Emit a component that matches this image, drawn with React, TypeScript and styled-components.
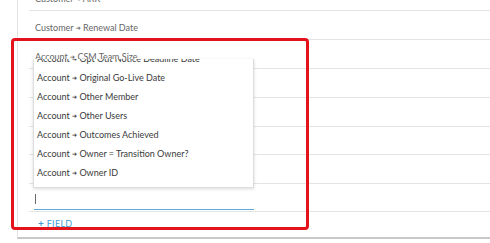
import React from 'react';
import styled, { createGlobalStyle } from 'styled-components';

const GlobalStyle = createGlobalStyle`
  html, body {
    margin: 0;
    padding: 0;
    background: #ffffff;
  }
  body {
    font-family: 'Lato', 'Liberation Sans', sans-serif;
  }
`;

interface RowSpec {
  path?: [string, string];
  h: number;
}

const rows: RowSpec[] = [
  { path: ['Customer', 'ARR'], h: 29 },
  { path: ['Customer', 'Renewal Date'], h: 29 },
  { path: ['Account', 'CSM Team Size'], h: 29 },
  { h: 29 },
  { h: 29 },
  { h: 28 },
  { h: 29 },
];

const options = [
  'Opt Out Notice Deadline Date',
  'Original Go-Live Date',
  'Other Member',
  'Other Users',
  'Outcomes Achieved',
  'Owner = Transition Owner?',
  'Owner ID',
];

const FieldPath: React.FC<{ parent: string; name: string }> = ({ parent, name }) => (
  <span>
    {parent} <Arrow>➜</Arrow> {name}
  </span>
);

const App: React.FC = () => {
  return (
    <Page>
      <GlobalStyle />
      <Panel>
        {rows.map((row, i) => (
          <FieldRow key={i} h={row.h}>
            {row.path && (
              <FieldLabel>
                <FieldPath parent={row.path[0]} name={row.path[1]} />
              </FieldLabel>
            )}
          </FieldRow>
        ))}
        <FieldRow h={28}>
          <InputBox>
            <Caret />
          </InputBox>
        </FieldRow>
        <AddRow>
          <AddButton>
            <Plus>+</Plus> FIELD
          </AddButton>
        </AddRow>
      </Panel>
      <Dropdown>
        <OptionList>
          {options.map(opt => (
            <OptionItem key={opt}>
              <FieldPath parent="Account" name={opt} />
            </OptionItem>
          ))}
        </OptionList>
      </Dropdown>
      <Highlight />
    </Page>
  );
};

export default App;

const Page = styled.div`
  position: relative;
  width: 490px;
  height: 243px;
  overflow: hidden;
  background: #ffffff;
`;

const Panel = styled.div`
  margin-left: 17px;
  margin-top: -18px;
  border-left: 1px solid #e2e2e2;
  border-bottom: 2px solid #c9c9c9;
  display: flex;
  flex-direction: column;
`;

const FieldRow = styled.div<{ h: number }>`
  height: ${p => p.h - 1}px;
  margin-left: 11px;
  border-bottom: 1px solid #e4e4e4;
  display: flex;
  align-items: center;
  padding-left: 6px;
`;

const FieldLabel = styled.span`
  font-size: 9px;
  color: #666666;
  padding-top: 4px;
  white-space: nowrap;
`;

const Arrow = styled.span`
  font-family: 'DejaVu Sans', sans-serif;
  font-size: 6px;
  vertical-align: 1px;
`;

const InputBox = styled.div`
  width: 219px;
  height: 22px;
  margin-left: -1px;
  border-bottom: 1px solid #63a9d8;
  display: flex;
  align-items: center;
  padding-left: 1px;
  margin-top: 1px;
`;

const Caret = styled.span`
  width: 1px;
  height: 10px;
  background: #6a6a6a;
  margin-top: 2px;
`;

const AddRow = styled.div`
  height: 25px;
  margin-left: 11px;
  padding-left: 9px;
  display: flex;
  align-items: flex-start;
`;

const AddButton = styled.span`
  font-size: 9px;
  color: #3e9bd5;
  margin-top: 5px;
  letter-spacing: 0.3px;
`;

const Plus = styled.span`
  font-weight: 700;
  font-size: 10px;
`;

const Dropdown = styled.div`
  position: absolute;
  left: 33px;
  top: 59px;
  width: 219px;
  height: 128px;
  background: #ffffff;
  border: 1px solid #dedede;
  border-top: none;
  box-shadow: 0 1px 3px rgba(0, 0, 0, 0.15);
  overflow: hidden;
`;

const OptionList = styled.div`
  display: flex;
  flex-direction: column;
  margin-top: -10px;
`;

const OptionItem = styled.div`
  height: 19px;
  line-height: 19px;
  padding-left: 3px;
  font-size: 9px;
  color: #3a3a3a;
  white-space: nowrap;
`;

const Highlight = styled.div`
  position: absolute;
  left: 11px;
  top: 38px;
  width: 292px;
  height: 186px;
  border: 3px solid #e3131c;
  border-radius: 4px;
`;
